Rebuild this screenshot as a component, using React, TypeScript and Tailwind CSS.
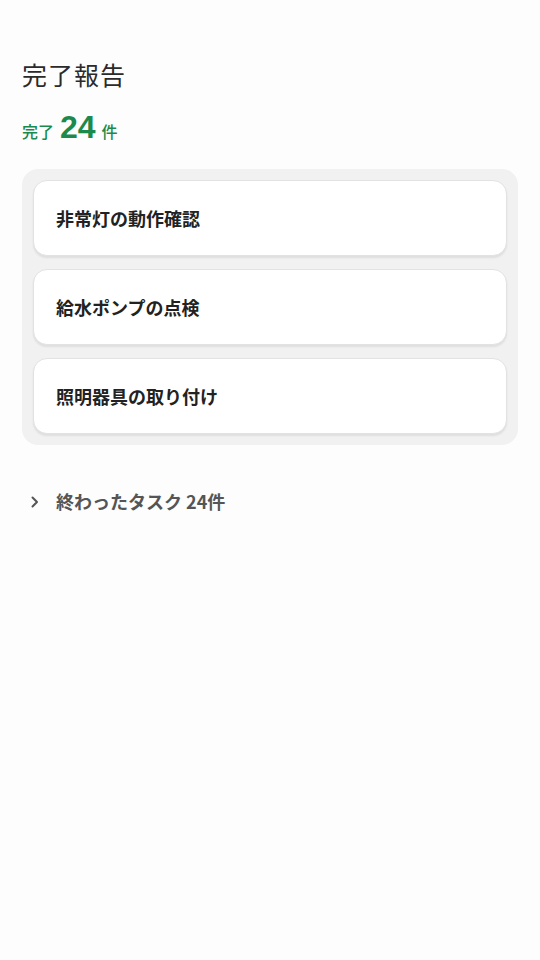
const tasks = ["非常灯の動作確認", "給水ポンプの点検", "照明器具の取り付け"];

const jp = "font-['Noto_Sans_CJK_JP','Noto_Sans',sans-serif]";

export default function App() {
  return (
    <div className={`min-h-[960px] w-full bg-[#fdfdfd] ${jp}`}>
      <div className="px-[22px] pt-[54px]">
        <h1 className="text-[25px] leading-[40px] font-normal text-[#2b2b2b] tracking-[0.04em]">
          完了報告
        </h1>
        <p className="mt-[15px] flex items-baseline gap-[6px] text-[#1b8a4c]">
          <span className="text-[16px] font-medium">完了</span>
          <span className="text-[32px] font-bold leading-[36px] font-['Liberation_Sans',sans-serif]">
            24
          </span>
          <span className="text-[16px] font-medium">件</span>
        </p>

        <div className="mt-[24px] flex flex-col gap-[13px] rounded-[16px] bg-[#f1f1f1] p-[11px]">
          {tasks.map((t) => (
            <div
              key={t}
              className="flex h-[76px] items-center rounded-[14px] border border-[#e2e2e2] bg-white px-[22px] shadow-[0_2px_2px_rgba(0,0,0,0.08)]"
            >
              <span className="text-[18px] font-bold text-[#222]">{t}</span>
            </div>
          ))}
        </div>

        <button className="mt-[43px] flex items-center gap-[16px] pl-[8px] text-[#555]">
          <svg width="10" height="14" viewBox="0 0 10 14" fill="none">
            <path d="M2.5 2.5 7 7l-4.5 4.5" stroke="#555" strokeWidth="2" strokeLinecap="round" strokeLinejoin="round" />
          </svg>
          <span className="text-[18px] font-bold">終わったタスク 24件</span>
        </button>
      </div>
    </div>
  );
}
